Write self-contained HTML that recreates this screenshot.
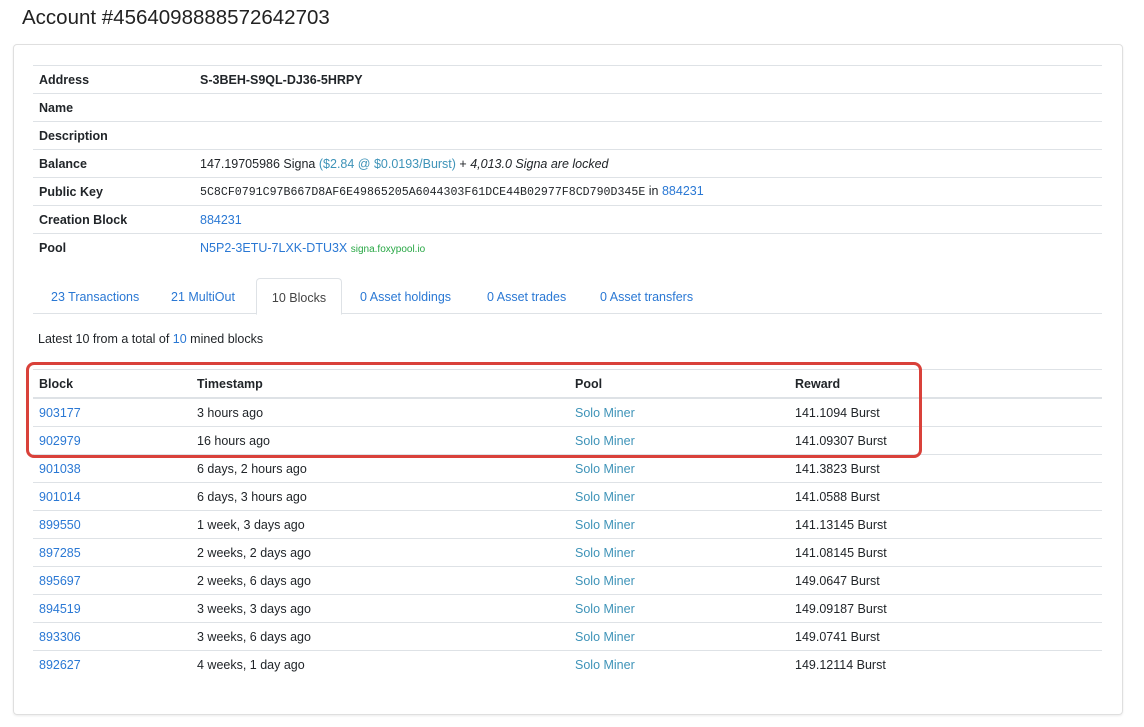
<!DOCTYPE html>
<html><head><meta charset="utf-8"><style>
body{margin:0;background:#fff;font-family:"Liberation Sans",sans-serif;font-size:12.5px;color:#212529;width:1144px;height:727px;overflow:hidden;position:relative}
h1{position:absolute;left:22px;top:6px;margin:0;font-weight:normal;font-size:20.5px;color:#222}
.card{position:absolute;left:13px;top:44px;width:1108px;height:669px;border:1px solid #dfdfdf;border-radius:4px;box-shadow:0 1px 2px rgba(0,0,0,.08)}
a{color:#2a78d4;text-decoration:none}
.t{position:absolute;left:33px;width:1069px;border-collapse:collapse}
.t td,.t th{height:27px;border-top:1px solid #dee2e6;padding:0 0 0 6px;text-align:left;vertical-align:middle}
.t th{font-weight:bold}
.info{top:65px}
.info td:first-child{font-weight:bold;width:155px}
.mono{font-family:"Liberation Mono",monospace;font-size:11.6px}
.tabs{position:absolute;left:33px;top:278px;width:1069px;height:35px;border-bottom:1px solid #dee2e6}
.tab{position:absolute;top:0;height:35px;line-height:38px;color:#2a78d4}
.tab.act{border:1px solid #dee2e6;border-bottom:1px solid #fff;border-radius:4px 4px 0 0;background:#fff;color:#444;text-align:center}
.blk{top:369px}
.blk tr:first-child th{border-top:1px solid #dee2e6;border-bottom:2px solid #dee2e6}
.teal{color:#3e93b8}
.red{position:absolute;left:26px;top:362px;width:890px;height:90px;border:3px solid #d9413a;border-radius:8px}
</style></head><body>
<h1>Account #4564098888572642703</h1>
<div class="card"></div>
<table class="t info">
<tr><td>Address</td><td><b>S-3BEH-S9QL-DJ36-5HRPY</b></td></tr>
<tr><td>Name</td><td></td></tr>
<tr><td>Description</td><td></td></tr>
<tr><td>Balance</td><td>147.19705986 Signa <span class="teal">($2.84 @ $0.0193/Burst)</span> + <i>4,013.0 Signa are locked</i></td></tr>
<tr><td>Public Key</td><td><span class="mono">5C8CF0791C97B667D8AF6E49865205A6044303F61DCE44B02977F8CD790D345E</span> in <a>884231</a></td></tr>
<tr><td>Creation Block</td><td><a>884231</a></td></tr>
<tr><td>Pool</td><td><a>N5P2-3ETU-7LXK-DTU3X</a> <span style="color:#28a745;font-size:10px">signa.foxypool.io</span></td></tr>
</table>
<div class="tabs">
<span class="tab" style="left:18px">23 Transactions</span>
<span class="tab" style="left:138px">21 MultiOut</span>
<span class="tab act" style="left:223px;width:84px">10 Blocks</span>
<span class="tab" style="left:327px">0 Asset holdings</span>
<span class="tab" style="left:454px">0 Asset trades</span>
<span class="tab" style="left:567px">0 Asset transfers</span>
</div>
<div style="position:absolute;left:38px;top:332px">Latest 10 from a total of <a>10</a> mined blocks</div>
<table class="t blk">
<tr><th style="width:152px">Block</th><th style="width:372px">Timestamp</th><th style="width:214px">Pool</th><th>Reward</th></tr>
<tr><td><a>903177</a></td><td>3 hours ago</td><td class="teal">Solo Miner</td><td>141.1094 Burst</td></tr>
<tr><td><a>902979</a></td><td>16 hours ago</td><td class="teal">Solo Miner</td><td>141.09307 Burst</td></tr>
<tr><td><a>901038</a></td><td>6 days, 2 hours ago</td><td class="teal">Solo Miner</td><td>141.3823 Burst</td></tr>
<tr><td><a>901014</a></td><td>6 days, 3 hours ago</td><td class="teal">Solo Miner</td><td>141.0588 Burst</td></tr>
<tr><td><a>899550</a></td><td>1 week, 3 days ago</td><td class="teal">Solo Miner</td><td>141.13145 Burst</td></tr>
<tr><td><a>897285</a></td><td>2 weeks, 2 days ago</td><td class="teal">Solo Miner</td><td>141.08145 Burst</td></tr>
<tr><td><a>895697</a></td><td>2 weeks, 6 days ago</td><td class="teal">Solo Miner</td><td>149.0647 Burst</td></tr>
<tr><td><a>894519</a></td><td>3 weeks, 3 days ago</td><td class="teal">Solo Miner</td><td>149.09187 Burst</td></tr>
<tr><td><a>893306</a></td><td>3 weeks, 6 days ago</td><td class="teal">Solo Miner</td><td>149.0741 Burst</td></tr>
<tr><td><a>892627</a></td><td>4 weeks, 1 day ago</td><td class="teal">Solo Miner</td><td>149.12114 Burst</td></tr>
</table>
<div class="red"></div>
</body></html>
